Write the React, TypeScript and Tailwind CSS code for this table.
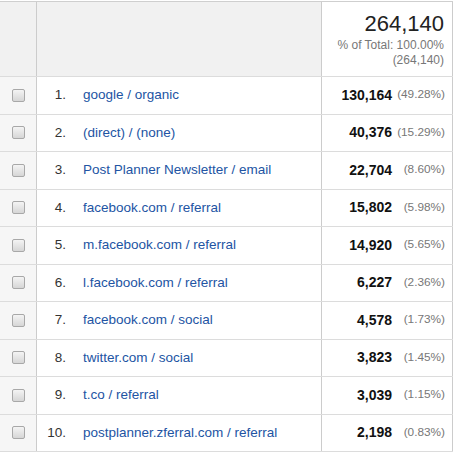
const rows = [
  { name: "google / organic", value: "130,164", pct: "(49.28%)" },
  { name: "(direct) / (none)", value: "40,376", pct: "(15.29%)" },
  { name: "Post Planner Newsletter / email", value: "22,704", pct: "(8.60%)" },
  { name: "facebook.com / referral", value: "15,802", pct: "(5.98%)" },
  { name: "m.facebook.com / referral", value: "14,920", pct: "(5.65%)" },
  { name: "l.facebook.com / referral", value: "6,227", pct: "(2.36%)" },
  { name: "facebook.com / social", value: "4,578", pct: "(1.73%)" },
  { name: "twitter.com / social", value: "3,823", pct: "(1.45%)" },
  { name: "t.co / referral", value: "3,039", pct: "(1.15%)" },
  { name: "postplanner.zferral.com / referral", value: "2,198", pct: "(0.83%)" },
];

const Checkbox = () => (
  <div className="h-[13px] w-[13px] rounded-[2px] border border-[#a8a8a8] bg-gradient-to-b from-[#f4f4f4] to-[#d6d6d6]" />
);

export default function App() {
  return (
    <div className="min-h-screen bg-white pt-px font-['Liberation_Sans',Arial,sans-serif] text-[#222]">
      <div className="w-[453px]">
        {/* header */}
        <div className="flex h-[76px] border-t border-b border-t-[#cfcfcf] border-b-[#dcdcdc]">
          <div className="w-[37px] border-r border-[#cccccc] bg-[#f1f1f1]" />
          <div className="w-[285px] border-r border-[#cccccc] bg-[#f1f1f1]" />
          <div className="flex w-[131px] flex-col items-end border-r border-[#cccccc] bg-white pr-[8px] pt-[10px]">
            <div className="text-[22px] leading-[24px] text-[#222]">264,140</div>
            <div className="mt-[2px] text-right text-[12px] leading-[14.5px] text-[#777]">
              <div>% of Total: 100.00%</div>
              <div>(264,140)</div>
            </div>
          </div>
        </div>

        {/* rows */}
        {rows.map((row, index) => (
          <div key={index} className="flex h-[37.5px] border-b border-[#dcdcdc]">
            <div className="flex w-[37px] items-center justify-center border-r border-[#cccccc] bg-[#f6f6f6]">
              <Checkbox />
            </div>
            <div className="flex w-[285px] items-center border-r border-[#cccccc] text-[13.5px]">
              <span className="w-[29px] text-right text-[#333]">{index + 1}.</span>
              <span className="ml-[17px] whitespace-nowrap text-[#2254a3]">{row.name}</span>
            </div>
            <div className="flex w-[131px] items-center justify-end border-r border-[#cccccc] pr-[7px]">
              <span className="text-[14px] font-bold text-[#111]">{row.value}</span>
              <span className="w-[53px] text-right text-[11.8px] text-[#777]">{row.pct}</span>
            </div>
          </div>
        ))}
      </div>
    </div>
  );
}
